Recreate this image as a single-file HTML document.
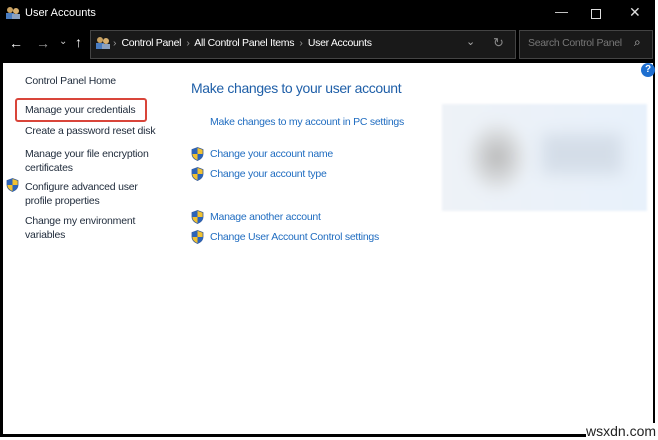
<!DOCTYPE html>
<html><head><style>
body{margin:0;width:658px;height:440px;background:#fff;position:relative;overflow:hidden;font-family:"Liberation Sans",sans-serif;}
.win{position:absolute;left:0;top:0;width:655px;height:437px;background:#000;}
.t{position:absolute;white-space:nowrap;}
.content{position:absolute;left:3px;top:63px;width:650px;height:371px;background:#fff;}
.l{position:absolute;font-size:10.5px;letter-spacing:-0.2px;color:#1e2a3a;white-space:nowrap;}
.b{position:absolute;font-size:10.5px;letter-spacing:-0.25px;color:#1f6cc0;white-space:nowrap;}
.sh{position:absolute;width:13px;height:14px;}
</style></head><body>
<div class="win">
 <svg style="position:absolute;left:5px;top:6px" width="16" height="14"><circle cx="5" cy="4" r="3" fill="#c8a060"/><rect x="1" y="7" width="8" height="6" fill="#4a7cc0"/><circle cx="11" cy="5" r="3" fill="#d8b070"/><rect x="7" y="8" width="8" height="5" fill="#8aa0c0"/></svg>
 <div class="t" style="left:25px;top:7px;font-size:11px;color:#fff">User Accounts</div>
 <div class="t" style="left:555px;top:4px;font-size:13px;color:#ddd">—</div>
 <div style="position:absolute;left:591px;top:9px;width:8px;height:8px;border:1px solid #ddd"></div>
 <div class="t" style="left:629px;top:4px;font-size:14px;color:#ddd">✕</div>
 <div class="t" style="left:9px;top:35px;font-size:14px;color:#fff">←</div>
 <div class="t" style="left:36px;top:35px;font-size:14px;color:#999">→</div>
 <div class="t" style="left:59px;top:36px;font-size:10px;color:#ccc">⌄</div>
 <div class="t" style="left:75px;top:34px;font-size:14px;color:#fff">↑</div>
 <div style="position:absolute;left:90px;top:30px;width:424px;height:27px;border:1px solid #444;background:#191919"></div>
 <svg style="position:absolute;left:95px;top:36px" width="16" height="14"><circle cx="5" cy="4" r="3" fill="#c8a060"/><rect x="1" y="7" width="8" height="6" fill="#4a7cc0"/><circle cx="11" cy="5" r="3" fill="#d8b070"/><rect x="7" y="8" width="8" height="5" fill="#8aa0c0"/></svg>
 <div class="t" style="left:113px;top:37px;font-size:10.5px;letter-spacing:-0.3px;color:#fff"><span style="color:#999">›</span>&nbsp; Control Panel &nbsp;<span style="color:#999">›</span>&nbsp; All Control Panel Items &nbsp;<span style="color:#999">›</span>&nbsp; User Accounts</div>
 <div class="t" style="left:466px;top:35px;font-size:11px;color:#aaa">⌄</div>
 <div class="t" style="left:493px;top:35px;font-size:13px;color:#888">↻</div>
 <div style="position:absolute;left:519px;top:30px;width:132px;height:27px;border:1px solid #444;background:#191919"></div>
 <div class="t" style="left:528px;top:37px;font-size:10.5px;letter-spacing:-0.3px;color:#777">Search Control Panel</div>
 <div class="t" style="left:634px;top:35px;font-size:12px;color:#bbb">⌕</div>
</div>
<div class="content">
 <div style="position:absolute;right:-2px;top:0;width:14px;height:14px;border-radius:50%;background:#1e6fd0;color:#fff;font-size:10px;font-weight:bold;text-align:center;line-height:14px">?</div>
 <div class="l" style="left:22px;top:12px">Control Panel Home</div>
 <div style="position:absolute;left:12px;top:35px;width:128px;height:20px;border:2px solid #d9453a;border-radius:3px"></div>
 <div class="l" style="left:22px;top:41px">Manage your credentials</div>
 <div class="l" style="left:22px;top:62px">Create a password reset disk</div>
 <div class="l" style="left:22px;top:84px;line-height:14px">Manage your file encryption<br>certificates</div>
 <div class="l" style="left:22px;top:117px;line-height:14px">Configure advanced user<br>profile properties</div>
 <div class="l" style="left:22px;top:151px;line-height:14px">Change my environment<br>variables</div>
 <div class="t" style="left:188px;top:17px;font-size:14px;letter-spacing:-0.35px;color:#1f5fa8">Make changes to your user account</div>
 <div class="b" style="left:207px;top:53px">Make changes to my account in PC settings</div>
 <div class="b" style="left:207px;top:85px">Change your account name</div>
 <div class="b" style="left:207px;top:105px">Change your account type</div>
 <div class="b" style="left:207px;top:148px">Manage another account</div>
 <div class="b" style="left:207px;top:168px">Change User Account Control settings</div>
 <div style="position:absolute;left:439px;top:41px;width:205px;height:107px;background:linear-gradient(90deg,#eef2f7,#e8f1fb);filter:blur(1px)">
  <div style="position:absolute;left:25px;top:18px;width:60px;height:70px;border-radius:50%;background:radial-gradient(#b8b8b8,#e8ecf0 70%);filter:blur(6px)"></div>
  <div style="position:absolute;left:100px;top:30px;width:80px;height:40px;background:#d4dde8;filter:blur(8px)"></div>
 </div>
</div>
<svg width="0" height="0" style="position:absolute"><defs><symbol id="s" viewBox="0 0 13 14"><path d="M6.5 0.5 L12 2.5 V7 C12 10.5 9 12.5 6.5 13.5 C4 12.5 1 10.5 1 7 V2.5Z" fill="#f2c230" stroke="#3a5a90" stroke-width="0.8"/><path d="M6.5 0.5 V7 H1 V2.5Z" fill="#2d64b8"/><path d="M6.5 7 H12 C12 10.5 9 12.5 6.5 13.5Z" fill="#2d64b8"/></symbol></defs></svg>
<svg class="sh" style="left:6px;top:178px"><use href="#s"/></svg>
<svg class="sh" style="left:191px;top:147px"><use href="#s"/></svg>
<svg class="sh" style="left:191px;top:167px"><use href="#s"/></svg>
<svg class="sh" style="left:191px;top:210px"><use href="#s"/></svg>
<svg class="sh" style="left:191px;top:230px"><use href="#s"/></svg>
<div class="t" style="left:586px;top:423px;font-size:14px;color:#222;background:#fff">wsxdn.com</div>
</body></html>
